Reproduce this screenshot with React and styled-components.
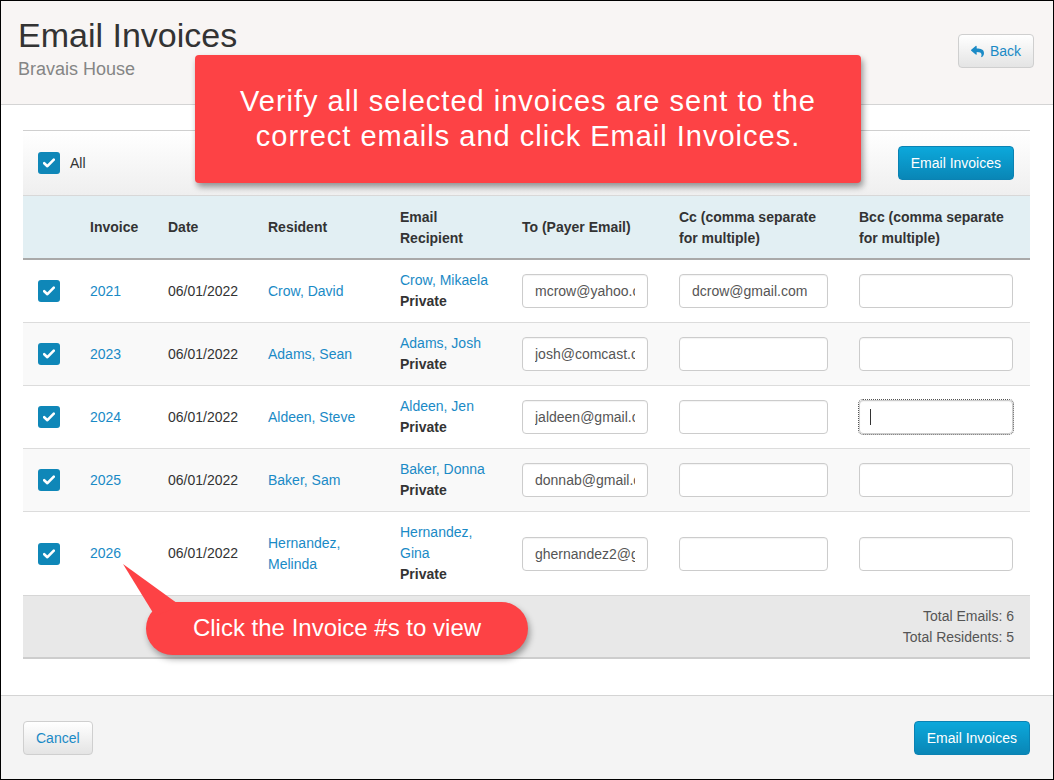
import React from "react";
import styled, { createGlobalStyle } from "styled-components";
import { FaReply } from "react-icons/fa";

const GlobalStyle = createGlobalStyle`
  html, body {
    margin: 0;
    padding: 0;
    background: #fff;
  }
  body {
    font-family: "Liberation Sans", Arial, sans-serif;
    font-size: 14px;
    color: #333;
  }
  * { box-sizing: border-box; }
`;

const rows = [
  { id: "2021", resident: "Crow, David", recipient: "Crow, Mikaela", to: "mcrow@yahoo.com", cc: "dcrow@gmail.com" },
  { id: "2023", resident: "Adams, Sean", recipient: "Adams, Josh", to: "josh@comcast.com", cc: "" },
  { id: "2024", resident: "Aldeen, Steve", recipient: "Aldeen, Jen", to: "jaldeen@gmail.com", cc: "", focus: true },
  { id: "2025", resident: "Baker, Sam", recipient: "Baker, Donna", to: "donnab@gmail.com", cc: "" },
  { id: "2026", resident: "Hernandez, Melinda", recipient: "Hernandez, Gina", to: "ghernandez2@gmail.com", cc: "", tall: true },
];

const Check = () => (
  <CheckBox>
    <svg width="12" height="10" viewBox="0 0 12 10">
      <path d="M1.2 5.2 L4.4 8.2 L10.8 1.6" fill="none" stroke="#fff" strokeWidth="2.6" strokeLinecap="round" strokeLinejoin="round" />
    </svg>
  </CheckBox>
);

const App = () => {
  return (
    <Frame>
      <GlobalStyle />
      <Header>
        <div>
          <h1>Email Invoices</h1>
          <div className="sub">Bravais House</div>
        </div>
        <DefaultButton>
          <FaReply className="reply" /> Back
        </DefaultButton>
      </Header>

      <Body>
        <Panel>
          <Toolbar>
            <label>
              <Check /> All
            </label>
            <PrimaryButton>Email Invoices</PrimaryButton>
          </Toolbar>
          <Table>
            <colgroup>
              <col style={{ width: 59 }} />
              <col style={{ width: 78 }} />
              <col style={{ width: 100 }} />
              <col style={{ width: 132 }} />
              <col style={{ width: 122 }} />
              <col style={{ width: 157 }} />
              <col style={{ width: 180 }} />
              <col style={{ width: 179 }} />
            </colgroup>
            <thead>
              <tr>
                <th />
                <th>Invoice</th>
                <th>Date</th>
                <th>Resident</th>
                <th>Email Recipient</th>
                <th>To (Payer Email)</th>
                <th>Cc (comma separate for multiple)</th>
                <th>Bcc (comma separate for multiple)</th>
              </tr>
            </thead>
            <tbody>
              {rows.map((r, i) => (
                <Row key={r.id} $striped={i % 2 === 1} $tall={r.tall}>
                  <td className="cb">
                    <Check />
                  </td>
                  <td>
                    <Link>{r.id}</Link>
                  </td>
                  <td>06/01/2022</td>
                  <td>
                    <Wrap $w={100}>
                      <Link>{r.resident}</Link>
                    </Wrap>
                  </td>
                  <td>
                    <Wrap $w={100}>
                      <Link>{r.recipient}</Link>
                      <br />
                      <b>Private</b>
                    </Wrap>
                  </td>
                  <td>
                    <Input $w={126} defaultValue={r.to} readOnly />
                  </td>
                  <td>
                    <Input $w={149} defaultValue={r.cc} readOnly />
                  </td>
                  <td>
                    <InputWrap>
                      <Input $w={154} $focus={r.focus} defaultValue="" readOnly />
                      {r.focus && <Caret />}
                    </InputWrap>
                  </td>
                </Row>
              ))}
            </tbody>
          </Table>
          <Totals>
            <div>Total Emails: 6</div>
            <div>Total Residents: 5</div>
          </Totals>
        </Panel>
      </Body>

      <Footer>
        <DefaultButton>Cancel</DefaultButton>
        <PrimaryButton>Email Invoices</PrimaryButton>
      </Footer>

      <TopCallout>
        Verify all selected invoices are sent to the
        <br />
        correct emails and click Email Invoices.
      </TopCallout>

      <PillCallout>
        <svg className="tail" width="80" height="70" viewBox="0 0 80 70">
          <polygon points="12,8 70,50 44,60" fill="#fd4245" />
        </svg>
        <span>Click the Invoice #s to view</span>
      </PillCallout>
    </Frame>
  );
};

const Frame = styled.div`
  position: relative;
  width: 1054px;
  height: 780px;
  border: 1px solid #000;
  display: flex;
  flex-direction: column;
  overflow: hidden;
  background: #fff;
`;

const Header = styled.header`
  height: 104px;
  background: #f8f5f4;
  border-bottom: 1px solid #d4d4d4;
  display: flex;
  align-items: flex-start;
  justify-content: space-between;
  padding: 14px 19px 0 17px;
  h1 {
    margin: 0;
    font-size: 34px;
    font-weight: normal;
    color: #333;
    line-height: 40px;
  }
  .sub {
    font-size: 18px;
    color: #858585;
    margin-top: 4px;
  }
  & > button {
    margin-top: 19px;
  }
`;

const DefaultButton = styled.button`
  font-family: inherit;
  font-size: 14px;
  color: #1a8ac6;
  height: 34px;
  padding: 0 12px;
  border: 1px solid #cfcfcf;
  border-radius: 4px;
  background: linear-gradient(#ffffff, #e4e4e4);
  display: inline-flex;
  align-items: center;
  gap: 6px;
  .reply {
    font-size: 13px;
    color: #1a8ac6;
  }
`;

const PrimaryButton = styled.button`
  font-family: inherit;
  font-size: 14px;
  color: #fff;
  height: 34px;
  padding: 0 12px;
  border: 1px solid #0a82b3;
  border-radius: 4px;
  background: linear-gradient(#0ca8db, #0986b6);
`;

const Body = styled.main`
  flex: 1;
  padding: 25px 23px 0 22px;
`;

const Panel = styled.section`
  border-top: 1px solid #cfcfcf;
`;

const Toolbar = styled.div`
  height: 65px;
  background: linear-gradient(#ffffff, #efefef);
  border-bottom: 1px solid #d8d8d8;
  display: flex;
  align-items: center;
  justify-content: space-between;
  padding: 0 16px 0 15px;
  label {
    display: flex;
    align-items: center;
    gap: 10px;
    font-size: 14px;
    color: #333;
  }
`;

const CheckBox = styled.span`
  width: 22px;
  height: 22px;
  border-radius: 3px;
  background: #0f87b8;
  display: inline-flex;
  align-items: center;
  justify-content: center;
  vertical-align: middle;
`;

const Table = styled.table`
  width: 100%;
  border-collapse: collapse;
  table-layout: fixed;
  th {
    background: #e2eff3;
    height: 63px;
    text-align: left;
    vertical-align: middle;
    font-weight: bold;
    font-size: 14px;
    color: #333;
    line-height: 21px;
    padding: 1px 14px 0 8px;
    border-bottom: 2px solid #a9a9a9;
  }
  th:nth-child(7) {
    padding-right: 30px;
  }
  th:nth-child(8) {
    padding-right: 8px;
  }
`;

const Row = styled.tr`
  background: ${(p) => (p.$striped ? "#f9f9f9" : "#fff")};
  td {
    height: ${(p) => (p.$tall ? "84px" : "63px")};
    border-top: 1px solid #dcdcdc;
    padding: 1px 8px 0;
    vertical-align: middle;
    line-height: 21px;
    color: #333;
    font-size: 14px;
  }
  td.cb {
    padding-left: 15px;
  }
  b {
    color: #333;
  }
`;

const Link = styled.a`
  color: #1a8ac6;
  text-decoration: none;
`;

const Wrap = styled.div`
  max-width: ${(p) => p.$w}px;
`;

const InputWrap = styled.div`
  position: relative;
  display: inline-block;
`;

const Input = styled.input`
  width: ${(p) => p.$w}px;
  height: 34px;
  border: 1px solid #cccccc;
  border-radius: 4px;
  padding: 0 12px;
  font-family: inherit;
  font-size: 14px;
  color: #555;
  background: #fff;
  outline: ${(p) => (p.$focus ? "1px dotted #555" : "none")};
  box-shadow: inset 0 1px 1px rgba(0, 0, 0, 0.05);
`;

const Caret = styled.span`
  position: absolute;
  left: 11px;
  top: 9px;
  width: 1px;
  height: 16px;
  background: #333;
`;

const Totals = styled.div`
  background: #e8e8e8;
  border-top: 1px solid #d6d6d6;
  border-bottom: 2px solid #cdcdcd;
  height: 64px;
  display: flex;
  flex-direction: column;
  align-items: flex-end;
  justify-content: center;
  padding: 1px 16px 0 0;
  color: #555;
  font-size: 14px;
  line-height: 21px;
`;

const Footer = styled.footer`
  height: 84px;
  background: #f4f4f4;
  border-top: 1px solid #d4d4d4;
  display: flex;
  align-items: center;
  justify-content: space-between;
  padding: 0 23px 0 22px;
`;

const TopCallout = styled.div`
  position: absolute;
  left: 194px;
  top: 54px;
  width: 666px;
  height: 128px;
  background: #fd4245;
  border-radius: 4px;
  box-shadow: 2px 4px 6px rgba(0, 0, 0, 0.4);
  color: #fff;
  font-size: 29px;
  letter-spacing: 1px;
  line-height: 35px;
  text-align: center;
  display: flex;
  align-items: center;
  justify-content: center;
`;

const PillCallout = styled.div`
  position: absolute;
  left: 145px;
  top: 601px;
  width: 382px;
  height: 53px;
  background: #fd4245;
  border-radius: 27px;
  box-shadow: 2px 4px 6px rgba(0, 0, 0, 0.35);
  color: #fff;
  font-size: 24px;
  display: flex;
  align-items: center;
  justify-content: center;
  .tail {
    position: absolute;
    left: -35px;
    top: -46px;
  }
  span {
    position: relative;
    top: -1px;
  }
`;

export default App;
